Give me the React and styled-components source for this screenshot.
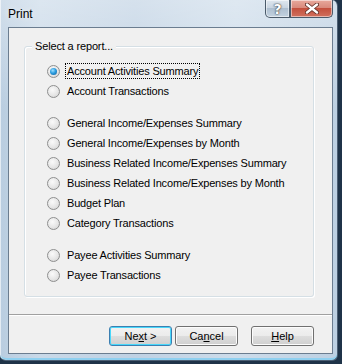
import styled, { createGlobalStyle } from "styled-components";

const GlobalStyle = createGlobalStyle`
  html, body {
    margin: 0;
    padding: 0;
    background: #1f3348;
  }
  body {
    font-family: "Liberation Sans", Arial, sans-serif;
    font-size: 11px;
    color: #000;
  }
`

const Window = styled.div`
  width: 338px;
  height: 361px;
  box-sizing: border-box;
  padding: 0 4px 6px 8px;
  display: flex;
  flex-direction: column;
  border-radius: 0 6px 6px 6px;
  border-right: 1px solid #4d6075;
  border-bottom: 1px solid #4d6075;
  background:
    linear-gradient(180deg, rgba(255,255,255,0.35) 0%, rgba(255,255,255,0) 30%),
    linear-gradient(90deg, #b9cde0 0%, #c9d9e8 12%, #bfd1e3 40%, #cddcea 70%, #bdd0e2 100%);
  box-shadow: inset 1px 0 0 rgba(255,255,255,0.6), inset 0 -2px 0 #8fd0f0;
`

const TitleBar = styled.div`
  height: 27px;
  display: flex;
  align-items: flex-start;
  justify-content: space-between;
`

const Title = styled.span`
  font-family: "Liberation Sans", Arial, sans-serif;
  font-size: 12px;
  margin-top: 7px;
  text-shadow: 0 0 6px rgba(255,255,255,0.9);
`

const Caption = styled.div`
  display: flex;
`

const CaptionButton = styled.div`
  height: 18px;
  width: ${p => p.$w}px;
  box-sizing: border-box;
  border: 1px solid #4a5a6a;
  border-top: none;
  display: flex;
  align-items: center;
  justify-content: center;
  font-family: "DejaVu Sans", sans-serif;
  font-size: 14px;
  font-weight: bold;
  color: #fff;
  text-shadow: 0 0 1px #333, 0 0 2px #333;
  border-radius: ${p => p.$red ? "0 0 5px 0" : "0 0 0 5px"};
  background: ${p => p.$red
    ? "linear-gradient(180deg, #e8a99c 0%, #d98a7c 45%, #c4503d 50%, #d0705e 100%)"
    : "linear-gradient(180deg, #dfe7ef 0%, #c9d5e1 45%, #aebfd0 50%, #c3d2e0 100%)"};
  box-shadow: inset 0 0 0 1px rgba(255,255,255,0.5);
`

const Client = styled.div`
  flex: 1;
  background: #f0f0f0;
  border: 1px solid #6b7d90;
  display: flex;
  flex-direction: column;
`

const GroupBox = styled.div`
  position: relative;
  margin: 18px 18px 0 15px;
  height: 251px;
  box-sizing: border-box;
  border: 1px solid #d5dfe5;
  border-radius: 3px;
  box-shadow: inset 1px 1px 0 #fff, 1px 1px 0 #fff;
  padding: 14px 0 0 22px;
`

const Legend = styled.span`
  position: absolute;
  left: 7px;
  top: -8px;
  padding: 0 3px;
  background: #f0f0f0;
  line-height: 14px;
  letter-spacing: -0.15px;
`

const List = styled.div`
  display: flex;
  flex-direction: column;
`

const Row = styled.label`
  display: flex;
  align-items: center;
  height: 20px;
  margin-top: ${p => p.$gap ? 12 : 0}px;
`

const Radio = styled.span`
  width: 13px;
  height: 13px;
  box-sizing: border-box;
  border-radius: 50%;
  border: 1px solid #8e8f8f;
  background: radial-gradient(circle at 40% 35%, #fafafa 0%, #e6e6e6 55%, #cfcfcf 100%);
  display: flex;
  align-items: center;
  justify-content: center;
  margin-right: 6px;
  &::after {
    content: "";
    display: ${p => p.$checked ? "block" : "none"};
    width: 7px;
    height: 7px;
    border-radius: 50%;
    background: radial-gradient(circle at 40% 35%, #9fe0ff 0%, #2b9de0 45%, #0e5a96 100%);
  }
`

const Text = styled.span`
  padding: 1px 1px;
  border: 1px dotted ${p => p.$focus ? "#000" : "transparent"};
  margin-left: -1px;
  letter-spacing: -0.17px;
`

const Separator = styled.div`
  height: 0;
  margin-top: 17px;
  border-top: 1px solid #a0a0a0;
  border-bottom: 1px solid #fff;
`

const ButtonBar = styled.div`
  display: flex;
  justify-content: flex-end;
  margin: 10px 18px 0 0;
`

const Button = styled.div`
  width: ${p => p.$w}px;
  height: 20px;
  box-sizing: border-box;
  margin-left: ${p => p.$ml}px;
  border: 1px solid ${p => p.$def ? "#3c7fb1" : "#707070"};
  border-radius: 3px;
  display: flex;
  align-items: center;
  justify-content: center;
  background: linear-gradient(180deg, #f2f2f2 0%, #ebebeb 50%, #dddddd 51%, #cfcfcf 100%);
  box-shadow: inset 0 0 0 1px ${p => p.$def ? "#48d7fa" : "#fcfcfc"};
  u { text-decoration: underline; }
`

const CloseGlyph = () => (
  <svg width="14" height="11" viewBox="0 0 14 11">
    <path d="M2 1.5 L12 9.5 M12 1.5 L2 9.5" stroke="#5a2a22" strokeWidth="4" strokeLinecap="round" />
    <path d="M2 1.5 L12 9.5 M12 1.5 L2 9.5" stroke="#fff" strokeWidth="2.4" strokeLinecap="round" />
  </svg>
)

const reports = [
  { label: "Account Activities Summary", checked: true },
  { label: "Account Transactions" },
  { label: "General Income/Expenses Summary", gap: true },
  { label: "General Income/Expenses by Month" },
  { label: "Business Related Income/Expenses Summary" },
  { label: "Business Related Income/Expenses by Month" },
  { label: "Budget Plan" },
  { label: "Category Transactions" },
  { label: "Payee Activities Summary", gap: true },
  { label: "Payee Transactions" },
]

export default function App() {
  return (
    <>
      <GlobalStyle />
      <Window>
        <TitleBar>
          <Title>Print</Title>
          <Caption>
            <CaptionButton $w={25}>?</CaptionButton>
            <CaptionButton $w={43} $red><CloseGlyph /></CaptionButton>
          </Caption>
        </TitleBar>
        <Client>
          <GroupBox>
            <Legend>Select a report...</Legend>
            <List>
              {reports.map(r => (
                <Row key={r.label} $gap={r.gap}>
                  <Radio $checked={r.checked} />
                  <Text $focus={r.checked}>{r.label}</Text>
                </Row>
              ))}
            </List>
          </GroupBox>
          <Separator />
          <ButtonBar>
            <Button $w={63} $def>Ne<u>x</u>t &gt;</Button>
            <Button $w={63} $ml={3}>Ca<u>n</u>cel</Button>
            <Button $w={63} $ml={13}><u>H</u>elp</Button>
          </ButtonBar>
        </Client>
      </Window>
    </>
  );
}
